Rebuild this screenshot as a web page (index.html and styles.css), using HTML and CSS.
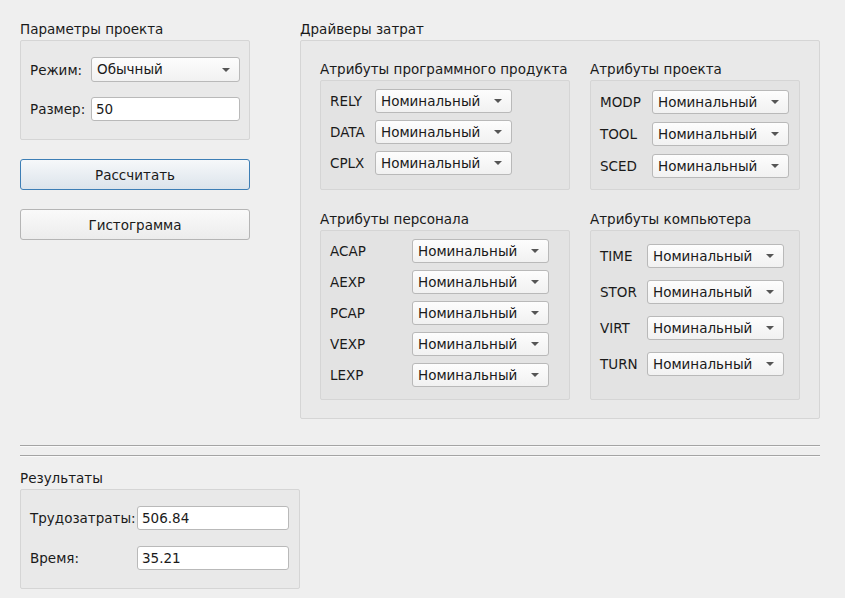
FILE: index.html
```html
<!DOCTYPE html>
<html lang="ru">
<head>
<meta charset="utf-8">
<title>COCOMO</title>
<link rel="stylesheet" href="styles.css">
</head>
<body>
<div class="window">
  <div class="top">
    <div class="left-col">
      <section class="group">
        <div class="group-title">Параметры проекта</div>
        <div class="group-box form form-params">
          <span class="lbl">Режим:</span>
          <div class="combo combo-tall"><span>Обычный</span><i class="arrow"></i></div>
          <span class="lbl">Размер:</span>
          <div class="edit">50</div>
        </div>
      </section>
      <button class="btn btn-default">Рассчитать</button>
      <button class="btn">Гистограмма</button>
    </div>

    <section class="group drivers">
      <div class="group-title">Драйверы затрат</div>
      <div class="group-box drivers-box">
        <section class="group">
          <div class="group-title">Атрибуты программного продукта</div>
          <div class="group-box attrs attrs-prod">
            <span class="lbl">RELY</span><div class="combo"><span>Номинальный</span><i class="arrow"></i></div>
            <span class="lbl">DATA</span><div class="combo"><span>Номинальный</span><i class="arrow"></i></div>
            <span class="lbl">CPLX</span><div class="combo"><span>Номинальный</span><i class="arrow"></i></div>
          </div>
        </section>
        <section class="group">
          <div class="group-title">Атрибуты проекта</div>
          <div class="group-box attrs attrs-proj">
            <span class="lbl">MODP</span><div class="combo"><span>Номинальный</span><i class="arrow"></i></div>
            <span class="lbl">TOOL</span><div class="combo"><span>Номинальный</span><i class="arrow"></i></div>
            <span class="lbl">SCED</span><div class="combo"><span>Номинальный</span><i class="arrow"></i></div>
          </div>
        </section>
        <section class="group">
          <div class="group-title">Атрибуты персонала</div>
          <div class="group-box attrs attrs-pers">
            <span class="lbl">ACAP</span><div class="combo"><span>Номинальный</span><i class="arrow"></i></div>
            <span class="lbl">AEXP</span><div class="combo"><span>Номинальный</span><i class="arrow"></i></div>
            <span class="lbl">PCAP</span><div class="combo"><span>Номинальный</span><i class="arrow"></i></div>
            <span class="lbl">VEXP</span><div class="combo"><span>Номинальный</span><i class="arrow"></i></div>
            <span class="lbl">LEXP</span><div class="combo"><span>Номинальный</span><i class="arrow"></i></div>
          </div>
        </section>
        <section class="group">
          <div class="group-title">Атрибуты компьютера</div>
          <div class="group-box attrs attrs-comp">
            <span class="lbl">TIME</span><div class="combo"><span>Номинальный</span><i class="arrow"></i></div>
            <span class="lbl">STOR</span><div class="combo"><span>Номинальный</span><i class="arrow"></i></div>
            <span class="lbl">VIRT</span><div class="combo"><span>Номинальный</span><i class="arrow"></i></div>
            <span class="lbl">TURN</span><div class="combo"><span>Номинальный</span><i class="arrow"></i></div>
          </div>
        </section>
      </div>
    </section>
  </div>

  <div class="separator separator-first"></div>
  <div class="separator separator-second"></div>

  <section class="group results">
    <div class="group-title">Результаты</div>
    <div class="group-box form form-results">
      <span class="lbl">Трудозатраты:</span>
      <div class="edit">506.84</div>
      <span class="lbl">Время:</span>
      <div class="edit">35.21</div>
    </div>
  </section>
</div>
</body>
</html>
```

FILE: styles.css
```css
* { box-sizing: border-box; }

html, body {
  margin: 0;
  padding: 0;
  background: #efefef;
}

body {
  font-family: "DejaVu Sans", "Open Sans", sans-serif;
  font-size: 13.5px;
  color: #1a1a1a;
  width: 845px;
  height: 598px;
  overflow: hidden;
}

.window {
  padding: 18px 25px 0 20px;
}

.top {
  display: flex;
  gap: 50px;
  align-items: flex-start;
}

.left-col {
  width: 230px;
  display: flex;
  flex-direction: column;
}

.group-title {
  height: 22px;
  line-height: 22px;
  white-space: nowrap;
}

.group-box {
  border: 1px solid #d5d5d5;
  border-radius: 2px;
  background: rgba(0, 0, 0, 0.022);
}

.lbl {
  white-space: nowrap;
  line-height: 24px;
}

/* forms (left box and results) */
.form {
  display: grid;
  align-items: center;
  padding: 16px 9px 18px 9px;
  row-gap: 15px;
}

.form-params {
  grid-template-columns: 61px 149px;
  height: 100px;
}

.form-results {
  grid-template-columns: 107px 152px;
  width: 280px;
  height: 100px;
}

/* combobox */
.combo {
  position: relative;
  height: 24px;
  border: 1px solid #b9b9b9;
  border-radius: 3px;
  background: linear-gradient(#fdfdfd, #f1f1f1);
  padding-left: 5px;
  line-height: 22px;
  white-space: nowrap;
}

.combo-tall {
  height: 25px;
  line-height: 23px;
}

.arrow {
  position: absolute;
  right: 9px;
  top: 50%;
  margin-top: -2px;
  width: 0;
  height: 0;
  border-left: 4px solid transparent;
  border-right: 4px solid transparent;
  border-top: 4px solid #555;
}

.edit {
  height: 24px;
  border: 1px solid #b9b9b9;
  border-radius: 3px;
  background: #fff;
  padding-left: 4px;
  line-height: 22px;
}

/* buttons */
.btn {
  font: inherit;
  color: #1a1a1a;
  height: 31px;
  border: 1px solid #b5b5b5;
  border-radius: 3px;
  background: linear-gradient(#fafafa, #ececec);
  padding: 0;
  margin-top: 19px;
}

.btn + .btn {
  margin-top: 19px;
}

.btn-default {
  border-color: #3d7eb5;
  background: linear-gradient(#f6f8fa, #dce4eb);
}

/* drivers */
.drivers {
  width: 520px;
}

.drivers-box {
  display: grid;
  grid-template-columns: 250px 210px;
  column-gap: 20px;
  row-gap: 18px;
  padding: 17px 19px 18px 19px;
}

.attrs {
  display: grid;
  align-content: start;
  padding-left: 9px;
}

.attrs-prod {
  grid-template-columns: 45px 137px;
  height: 110px;
  padding-top: 8px;
  row-gap: 7px;
}

.attrs-proj {
  grid-template-columns: 52px 137px;
  height: 110px;
  padding-top: 9px;
  row-gap: 8px;
}

.attrs-pers {
  grid-template-columns: 82px 137px;
  height: 170px;
  padding-top: 8px;
  row-gap: 7px;
}

.attrs-comp {
  grid-template-columns: 47px 137px;
  height: 170px;
  padding-top: 13px;
  row-gap: 12px;
}

.separator {
  width: 800px;
  height: 2px;
  border-top: 1px solid #a4a4a4;
  border-bottom: 1px solid #fafafa;
}

.separator-first {
  margin-top: 26px;
}

.separator-second {
  margin-top: 8px;
}

.results {
  margin-top: 10px;
}
```
